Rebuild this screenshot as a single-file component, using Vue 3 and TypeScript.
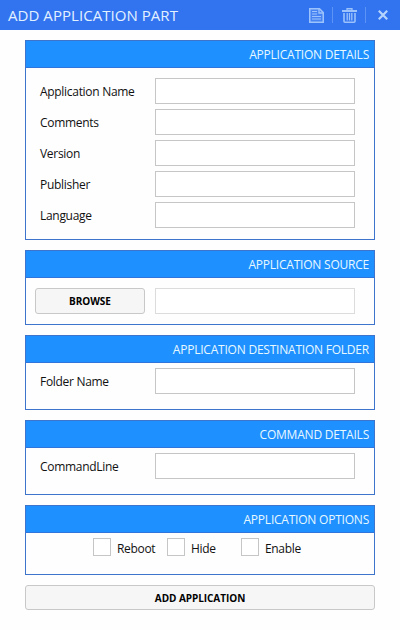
<script setup lang="ts">
import { reactive } from 'vue'

interface Field {
  key: string
  label: string
}

const detailFields: Field[] = [
  { key: 'name', label: 'Application Name' },
  { key: 'comments', label: 'Comments' },
  { key: 'version', label: 'Version' },
  { key: 'publisher', label: 'Publisher' },
  { key: 'language', label: 'Language' },
]

const options: Field[] = [
  { key: 'reboot', label: 'Reboot' },
  { key: 'hide', label: 'Hide' },
  { key: 'enable', label: 'Enable' },
]

const values = reactive<Record<string, string>>({})
const checked = reactive<Record<string, boolean>>({})
</script>

<template>
  <div class="window">
    <header class="titlebar">
      <h1>ADD APPLICATION PART</h1>
      <div class="tools">
        <button class="tool" type="button">
          <svg width="15" height="15" viewBox="0 0 15 15" fill="none" stroke="currentColor">
            <path d="M.75 .75H10.5L14.25 4.5V14.25H.75Z" stroke-width="1.5" fill="currentColor" fill-opacity=".2" />
            <path d="M10 1V5H14" stroke-width="1.3" />
            <path d="M3 3.5H8M3 6H8M3 8.5H12M3 11H12" stroke-width="1.1" />
          </svg>
        </button>
        <i class="divider"></i>
        <button class="tool" type="button">
          <svg width="15" height="15" viewBox="0 0 15 15" fill="none" stroke="currentColor">
            <path d="M5 2.5V.75H10V2.5" stroke-width="1.3" />
            <path d="M0 3H15" stroke-width="2" />
            <path d="M2 5V13.2Q2 14.2 3 14.2H12Q13 14.2 13 13.2V5" stroke-width="1.6" />
            <path d="M5.2 5V12.5M7.5 5V12.5M9.8 5V12.5" stroke-width="1.3" />
          </svg>
        </button>
        <i class="divider"></i>
        <button class="tool close" type="button">
          <svg width="10" height="10" viewBox="0 0 10 10" fill="none" stroke="currentColor" stroke-width="2.2">
            <path d="M.8 .8L9.2 9.2M9.2 .8L.8 9.2" />
          </svg>
        </button>
      </div>
    </header>

    <main class="content">
      <section class="panel details">
        <h2>APPLICATION DETAILS</h2>
        <div class="rows">
          <label v-for="f in detailFields" :key="f.key" class="row">
            <span class="label">{{ f.label }}</span>
            <input v-model="values[f.key]" type="text" />
          </label>
        </div>
      </section>

      <section class="panel">
        <h2>APPLICATION SOURCE</h2>
        <div class="row browse-row">
          <button class="btn browse" type="button">BROWSE</button>
          <input class="readonly" type="text" readonly />
        </div>
      </section>

      <section class="panel single">
        <h2>APPLICATION DESTINATION FOLDER</h2>
        <label class="row">
          <span class="label">Folder Name</span>
          <input v-model="values.folder" type="text" />
        </label>
      </section>

      <section class="panel single">
        <h2>COMMAND DETAILS</h2>
        <label class="row">
          <span class="label">CommandLine</span>
          <input v-model="values.command" type="text" />
        </label>
      </section>

      <section class="panel options">
        <h2>APPLICATION OPTIONS</h2>
        <div class="checks">
          <label v-for="o in options" :key="o.key" class="check">
            <input v-model="checked[o.key]" type="checkbox" />
            <span>{{ o.label }}</span>
          </label>
        </div>
      </section>

      <button class="btn add" type="button">ADD APPLICATION</button>
    </main>
  </div>
</template>

<style>
body {
  background: #fefefe;
}
</style>

<style scoped>
.window {
  height: 630px;
  overflow: hidden;
  background: #fefefe;
  font-family: 'Open Sans', 'Noto Sans', sans-serif;
  font-size: 12px;
  color: #111;
}
.window *,
.window {
  box-sizing: border-box;
}
.titlebar {
  height: 30px;
  padding: 0 12px 0 8px;
  display: flex;
  align-items: center;
  justify-content: space-between;
  background: #3273f0;
}
h1 {
  margin: 0;
  font-size: 15px;
  line-height: 30px;
  font-weight: 400;
  letter-spacing: 0.05px;
  color: #e2f1ff;
  white-space: nowrap;
}
.tools {
  display: flex;
  align-items: center;
  color: #9cc3fb;
}
.tool {
  display: flex;
  padding: 0;
  border: 0;
  background: none;
  color: inherit;
}
.divider {
  width: 1px;
  height: 16px;
  margin: 0 9px 0 8px;
  background: #5c93f5;
}
.tool.close {
  margin-left: 3px;
  color: #b5d4fd;
}
.content {
  padding: 10px 25px 0;
  display: flex;
  flex-direction: column;
  gap: 10px;
}
.panel {
  border: 1px solid #3f74cc;
  height: 75px;
}
.panel.details {
  height: 200px;
}
.panel.options {
  height: 70px;
}
h2 {
  margin: 0;
  height: 27px;
  padding-right: 5px;
  border-bottom: 1px solid #3075dc;
  background: #1e90ff;
  color: #e8f8ff;
  font-size: 12px;
  line-height: 27px;
  font-weight: 400;
  letter-spacing: -0.22px;
  text-align: right;
  white-space: nowrap;
}
.rows {
  padding-top: 10px;
  display: flex;
  flex-direction: column;
  gap: 5px;
}
.row {
  display: flex;
  align-items: center;
  height: 26px;
  padding-left: 14px;
}
.single .row {
  margin-top: 5px;
}
.browse-row {
  margin-top: 10px;
  padding-left: 9px;
}
.label {
  width: 115px;
  padding-top: 2px;
  line-height: 26px;
  letter-spacing: -0.3px;
  white-space: nowrap;
}
input[type='text'] {
  width: 200px;
  height: 26px;
  margin: 0;
  padding: 0 5px;
  border: 1px solid #c6c6c6;
  border-radius: 0;
  background: #fff;
  font: inherit;
  outline: none;
}
input.readonly {
  border-color: #dcdcdc;
}
.btn {
  padding: 0;
  border: 1px solid #c8c8c8;
  border-radius: 3px;
  background: #f6f6f6;
  color: #000;
  font-family: inherit;
  font-size: 10px;
  font-weight: 700;
  letter-spacing: -0.05px;
}
.browse {
  width: 110px;
  height: 26px;
  margin-right: 10px;
}
.add {
  height: 25px;
}
.checks {
  display: flex;
  padding: 5px 0 0 67px;
}
.check {
  display: flex;
  width: 74px;
  height: 18px;
  gap: 6px;
}
.check span {
  line-height: 21px;
  letter-spacing: -0.33px;
}
input[type='checkbox'] {
  appearance: none;
  flex: none;
  width: 18px;
  height: 18px;
  margin: 0;
  border: 1px solid #c6c6c6;
  background: #fff;
}
input[type='checkbox']:checked {
  background: #1e90ff;
}
</style>
